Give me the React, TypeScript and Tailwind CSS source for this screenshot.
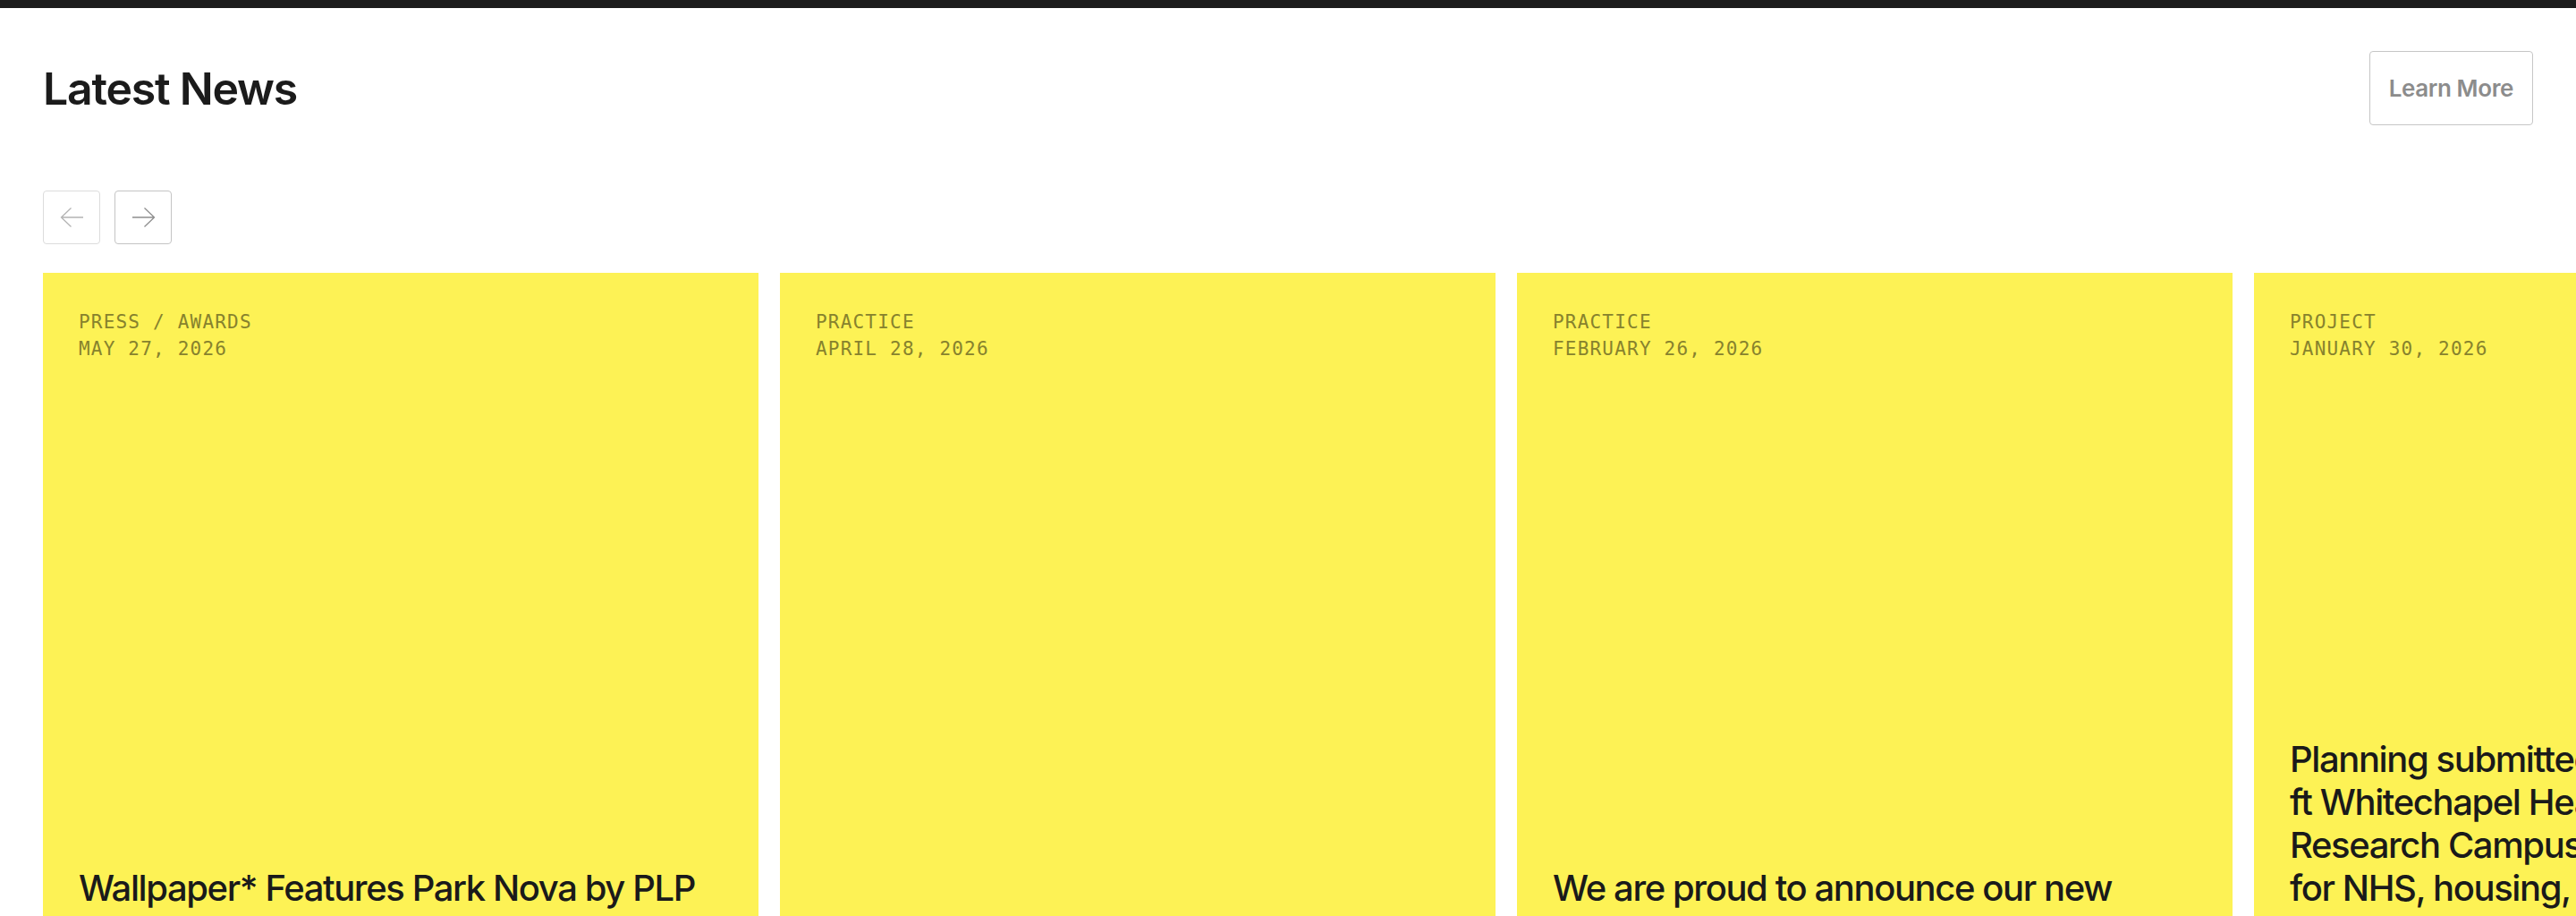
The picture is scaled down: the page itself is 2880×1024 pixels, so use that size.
import React from 'react'

interface NewsItem {
  category: string
  date: string
  title: string
}

const news: NewsItem[] = [
  {
    category: 'PRESS / AWARDS',
    date: 'MAY 27, 2026',
    title: 'Wallpaper* Features Park Nova by PLP\nArchitecture',
  },
  {
    category: 'PRACTICE',
    date: 'APRIL 28, 2026',
    title: 'PLP Architecture at MIPIM 2026',
  },
  {
    category: 'PRACTICE',
    date: 'FEBRUARY 26, 2026',
    title: 'We are proud to announce our new\nAssociate Directors',
  },
  {
    category: 'PROJECT',
    date: 'JANUARY 30, 2026',
    title:
      'Planning submitted for 1.3 million sq\nft Whitechapel Health and Life Science\nResearch Campus providing space\nfor NHS, housing, community and\neducation uses',
  },
]

function Arrow({ dir, color }: { dir: 'left' | 'right'; color: string }) {
  const d = dir === 'left' ? 'M26 12H1.5M12.5 1.5 1.5 12l11 10.5' : 'M1 12h24.5M14.5 1.5 25.5 12l-11 10.5'
  return (
    <svg width="27" height="24" viewBox="0 0 27 24" fill="none" stroke={color} strokeWidth="1.3">
      <path d={d} />
    </svg>
  )
}

function NewsCard({ item }: { item: NewsItem }) {
  return (
    <article className="flex h-[800px] w-[800px] shrink-0 flex-col justify-between bg-[#fdf255] p-10">
      <div className="font-['DejaVu_Sans_Mono',monospace] text-[21px] leading-[30px] tracking-[1.2px] text-[#87822d]">
        <div>{item.category}</div>
        <div>{item.date}</div>
      </div>
      <h3 className="whitespace-pre-line text-[40px] leading-[48px] font-medium tracking-[-0.035em] text-[#1a1a1a]">
        {item.title}
      </h3>
    </article>
  )
}

export default function App() {
  return (
    <div className="min-h-screen overflow-hidden bg-white font-['Inter',sans-serif]">
      <div className="h-[9px] bg-[#1c1c1c]" />
      <section className="px-12">
        <div className="mt-12 flex items-center justify-between">
          <h2 className="text-[50px] leading-none font-semibold tracking-[-0.025em] text-[#1b1b1b]">Latest News</h2>
          <button className="flex h-[83px] items-center rounded-[4px] border border-[#c6c6c6] bg-white px-[21px] text-[26px] font-semibold tracking-[-0.015em] text-[#8c8c8c]">
            Learn More
          </button>
        </div>

        <div className="mt-[73px] flex gap-4">
          <button className="flex h-[60px] w-16 items-center justify-center rounded-[4px] border border-[#dcdcdc] bg-white">
            <Arrow dir="left" color="#b4b4b4" />
          </button>
          <button className="flex h-[60px] w-16 items-center justify-center rounded-[4px] border border-[#c4c4c4] bg-white">
            <Arrow dir="right" color="#8e8e8e" />
          </button>
        </div>

        <div className="mt-8 flex gap-6">
          {news.map((item, index) => (
            <NewsCard key={index} item={item} />
          ))}
        </div>
      </section>
    </div>
  )
}
